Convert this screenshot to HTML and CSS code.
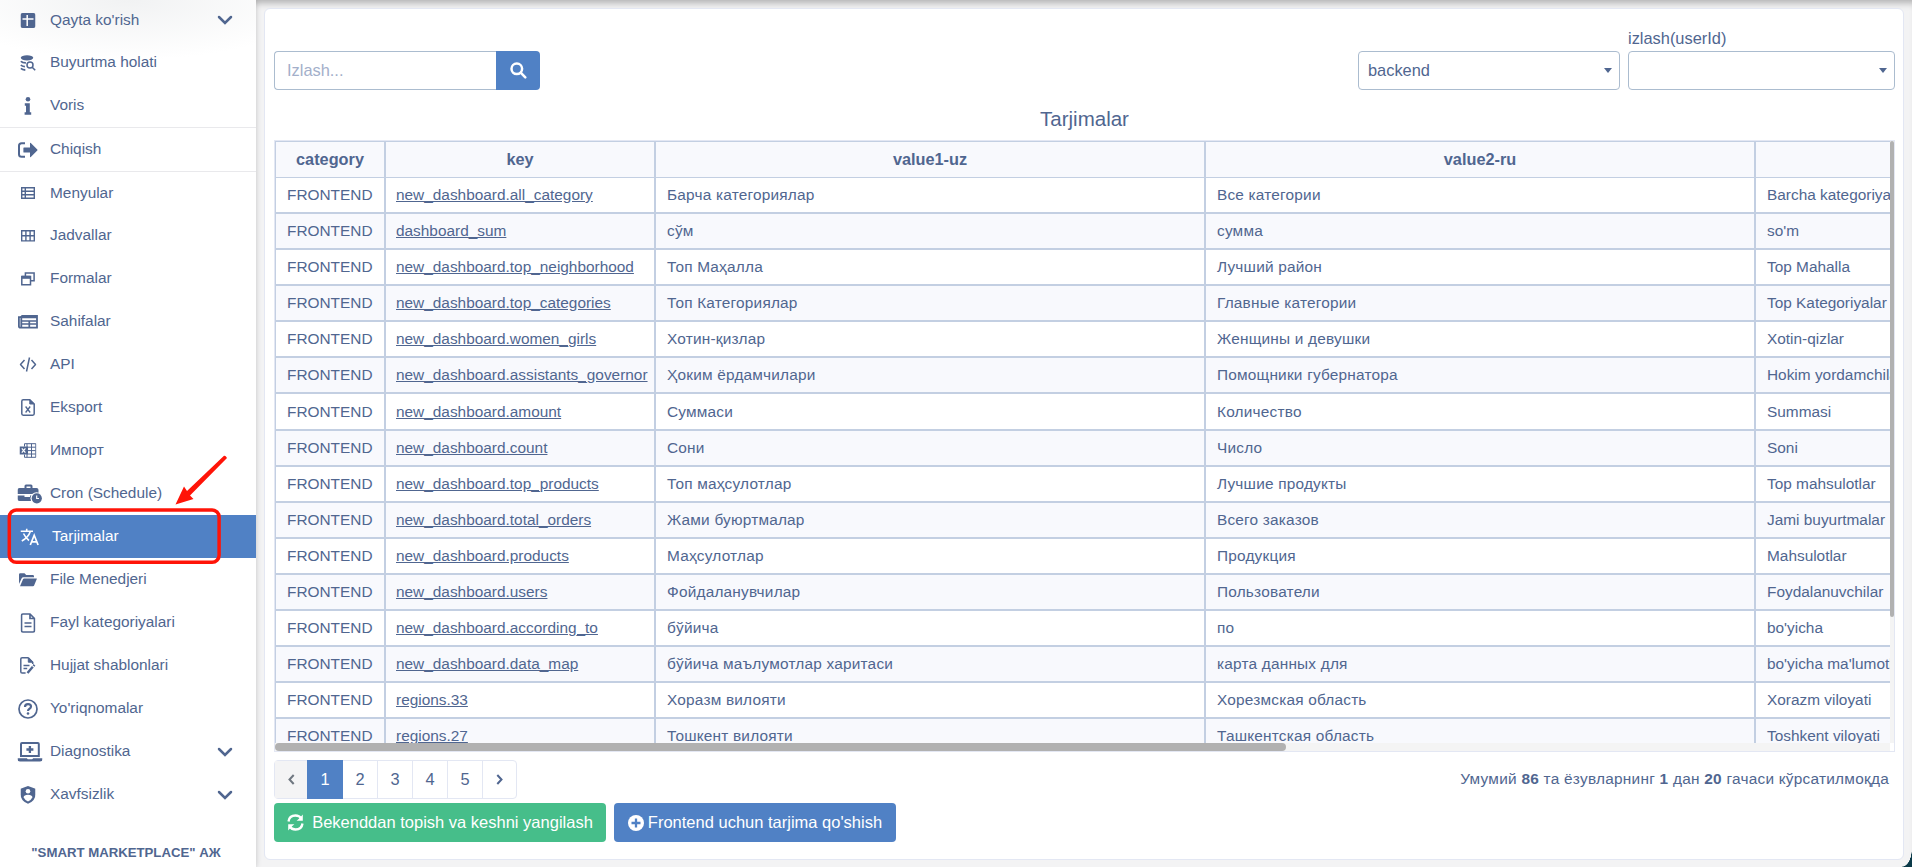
FILE: index.html
```html
<!DOCTYPE html>
<html lang="uz">
  <head>
    <meta charset="UTF-8" />
    <title>Tarjimalar</title>
    <link rel="stylesheet" href="styles.css" />
  </head>

  <body>
    <aside class="sidebar">
      <ul class="menu">
        <li class="menu-item first">
          <span class="icon"><svg width="15" height="15" viewBox="0 0 15 15"><rect width="15" height="15" rx="2" fill="currentColor" stroke="none" /><path d="M6.7 2v11M2 6h11" stroke="#fff" stroke-width="1.5" /></svg></span>
          <span class="label">Qayta ko'rish</span>
          <svg class="chevron" width="16" height="10" viewBox="0 0 16 10"><path d="M2 2l6 6 6-6" /></svg>
        </li>
        <li class="menu-item">
          <span class="icon"><svg width="16" height="16" viewBox="0 0 16 16" stroke="currentColor"><ellipse cx="7" cy="2.8" rx="6.2" ry="2.6" fill="currentColor" stroke="none" /><path d="M.9 6.2c1 1.3 3 1.6 5 1.6M.9 10c.8 1 2.2 1.5 4 1.6M.9 13.4c1 1 2.4 1.5 4.4 1.6" stroke-width="1.8" /><circle cx="10" cy="10" r="3" stroke-width="1.5" /><path d="M12.2 12.2l3 3" stroke-width="1.6" /></svg></span>
          <span class="label">Buyurtma holati</span>
        </li>
        <li class="menu-item">
          <span class="icon"><svg width="8" height="18" viewBox="0 0 8 18" fill="currentColor"><circle cx="4" cy="2.3" r="2.3" /><path d="M.8 6.3h5v9h1.4v2.4H.6v-2.4H2V8.8H.8z" /></svg></span>
          <span class="label">Voris</span>
        </li>
        <li class="menu-item lined">
          <span class="icon"><svg width="20" height="16" viewBox="0 0 20 16"><path d="M7 1.2H3.6Q1 1.2 1 3.8v8.4q0 2.6 2.6 2.6H7" stroke-width="2" /><path d="M6 5.4h6V1.4q0-1 .8-.3l6.5 6.3q.5.6 0 1.2l-6.5 6.3q-.8.7-.8-.3v-4H6q-.6 0-.6-.6V6q0-.6.6-.6z" fill="currentColor" stroke="none" /></svg></span>
          <span class="label">Chiqish</span>
        </li>
        <li class="menu-item lined">
          <span class="icon"><svg width="14" height="12" viewBox="0 0 14 12"><path d="M.7.7h12.6v10.6H.7zM4.3.7v10.6M.7 4.2h12.6M.7 7.8h12.6" stroke-width="1.4" /></svg></span>
          <span class="label">Menyular</span>
        </li>
        <li class="menu-item">
          <span class="icon"><svg width="14" height="12" viewBox="0 0 14 12"><path d="M.7.7h12.6v10.2H.7zM4.9.7v10.2M9.1.7v10.2M.7 5.8h12.6" stroke-width="1.4" /></svg></span>
          <span class="label">Jadvallar</span>
        </li>
        <li class="menu-item">
          <span class="icon"><svg width="14" height="14" viewBox="0 0 14 14"><path d="M4.4 4V.9h8.7v7.9H10M.8 4.6h8.7v8.1H.8z" stroke-width="1.5" /><path d="M.8 5.3h8.7" stroke-width="3" /></svg></span>
          <span class="label">Formalar</span>
        </li>
        <li class="menu-item">
          <span class="icon"><svg width="20" height="14" viewBox="0 0 20 14"><path d="M3.3 1H19v11.7H2.5Q.9 12.7.9 11.2V2.2H3M3.3 1v11" stroke-width="1.8" /><path d="M4 2.3h15M4 6h14.5M4 9h14.5M11.3 6v6" stroke-width="1.7" /></svg></span>
          <span class="label">Sahifalar</span>
        </li>
        <li class="menu-item">
          <span class="icon"><svg width="17" height="15" viewBox="0 0 17 15"><path d="M5 3L1 7.5 5 12M12 3l4 4.5-4 4.5M10 .5L7 14.5" stroke-width="1.5" /></svg></span>
          <span class="label">API</span>
        </li>
        <li class="menu-item">
          <span class="icon"><svg width="14" height="17" viewBox="0 0 14 17"><path d="M8.8.8H2.2Q.8.8.8 2.2v12.6q0 1.4 1.4 1.4h9.6q1.4 0 1.4-1.4V5z" stroke-width="1.5" /><path d="M8.8.8V5h4.4z" fill="currentColor" /><path d="M4.6 7.5l4.6 6M9.2 7.5l-4.6 6" stroke-width="1.3" /></svg></span>
          <span class="label">Eksport</span>
        </li>
        <li class="menu-item">
          <span class="icon"><svg width="17" height="15" viewBox="0 0 17 15"><path d="M5 3.5V.7h11.3v13.6H5v-2.8M12 .7v13.6M7.5.7v13.6M8 4.2h8M8 7.6h8M8 11h8" stroke-width="1" /><path d="M0 3.5h8.5v8H0z" fill="currentColor" stroke="none" /><path d="M2.3 5.3l3.6 4.4M5.9 5.3L2.3 9.7" stroke="#fff" stroke-width="1.2" /></svg></span>
          <span class="label">Импорт</span>
        </li>
        <li class="menu-item">
          <span class="icon wide"><svg width="25" height="20" viewBox="0 0 25 20" fill="currentColor"><path d="M7 4V2q0-1.5 1.5-1.5h5Q15 .5 15 2v2h4q2 0 2 2v4H0V6q0-2 2-2zm2 0h4V2.5H9zM0 11.5h7V13h5.5v-1.5h3V17H2q-2 0-2-2z" /><circle cx="19" cy="14.3" r="6" fill="#fff" /><circle cx="19.3" cy="14.3" r="5.1" /><path d="M19.2 11.5v3h2.3" fill="none" stroke="#fff" stroke-width="1.2" /></svg></span>
          <span class="label">Cron (Schedule)</span>
        </li>
        <li class="menu-item active">
          <span class="icon"><svg width="19" height="18" viewBox="0 0 19 18"><path d="M0 3.2h12.5M6.2.7v2.5M9.8 3.5Q7.8 9.5 1.3 13M3 5.5q2.2 4.5 5.5 7" stroke-width="1.6" /><path d="M9.8 17l3.9-9.7L17.6 17M11.2 13.8h5" stroke-width="1.7" /></svg></span>
          <span class="label">Tarjimalar</span>
          <svg class="callout" width="224" height="118" viewBox="0 0 224 118">
            <rect x="2.3" y="55" width="209.8" height="52.2" rx="7" fill="none" stroke="#ff1408" stroke-width="3.5" />
            <path d="M217 .8q1.500-.5 3 2.200L183 40.500l3.500 3.500-18 5.500 8.500-18 3 4.500z" fill="#ff1408" />
          </svg>
        </li>
        <li class="menu-item">
          <span class="icon"><svg width="18" height="14" viewBox="0 0 18 14" fill="currentColor"><path d="M0 11V1.5Q0 .3 1.2.3h4.3l1.7 1.8h6.6q1.2 0 1.2 1.2v1H4.3Q3.2 4.300 2.700 5.300zM1 13.300l3-7q.3-.8 1.100-.8H17.500q.6 0 .3.600l-2.700 6.500q-.3.700-1.100.7z" /></svg></span>
          <span class="label">File Menedjeri</span>
        </li>
        <li class="menu-item">
          <span class="icon"><svg width="15" height="20" viewBox="0 0 15 20"><path d="M9.5 1H2.4Q1 1 1 2.4v15.2Q1 19 2.4 19h10.2q1.4 0 1.4-1.4V5.500zM9.5 1v4.5H14M4 10h7M4 13.5h7" stroke-width="1.7" /></svg></span>
          <span class="label">Fayl kategoriyalari</span>
        </li>
        <li class="menu-item">
          <span class="icon"><svg width="16" height="17" viewBox="0 0 16 17"><path d="M8.3.8H2.1Q.8.8.8 2.1v12.6q0 1.3 1.3 1.3h3.500M12.700 7V5.200L8.300.800M3.500 8.500h6M3.500 11.500h3.700" stroke-width="1.5" /><path d="M8.3.8v4.4h4.4z" fill="currentColor" /><path d="M7.5 16l5.3-6.2M13.5 9l1-1.1" stroke-width="2.4" /></svg></span>
          <span class="label">Hujjat shablonlari</span>
        </li>
        <li class="menu-item">
          <span class="icon"><svg width="20" height="20" viewBox="0 0 20 20"><circle cx="10" cy="10" r="9" stroke-width="1.7" /><path d="M7 8q0-2.8 3-2.8t3 2.4q0 1.3-1.5 2.2T10 12" stroke-width="2.2" /><circle cx="10" cy="14.5" r="1.3" fill="currentColor" stroke="none" /></svg></span>
          <span class="label">Yo'riqnomalar</span>
        </li>
        <li class="menu-item">
          <span class="icon wide"><svg width="25" height="20" viewBox="0 0 25 20"><path d="M3.5 14V2q0-1 1-1h15.8q1 0 1 1v12z" stroke-width="2" /><path d="M12.4 4v7M8.9 7.5h7" stroke-width="2.3" /><path d="M0 16.3h9.5q.3 1 1 1h4q.8 0 1-1H25v1q0 2.3-2.5 2.3h-20Q0 19.600 0 17.300z" fill="currentColor" stroke="none" /></svg></span>
          <span class="label">Diagnostika</span>
          <svg class="chevron" width="16" height="10" viewBox="0 0 16 10"><path d="M2 2l6 6 6-6" /></svg>
        </li>
        <li class="menu-item">
          <span class="icon"><svg width="15" height="18" viewBox="0 0 15 18"><path d="M7.5 0L15 2.8v5.4q0 6.5-7.5 9.6Q0 14.7 0 8.2V2.8z" fill="currentColor" stroke="none" /><circle cx="7.5" cy="5.3" r="2.3" fill="#fff" stroke="none" /><path d="M3 11.2q.5-2.5 4.5-2.5t4.5 2.5q-1.5 3-4.5 4.4Q4.5 14.2 3 11.2z" fill="#fff" stroke="none" /></svg></span>
          <span class="label">Xavfsizlik</span>
          <svg class="chevron" width="16" height="10" viewBox="0 0 16 10"><path d="M2 2l6 6 6-6" /></svg>
        </li>
      </ul>
      <div class="company">"SMART MARKETPLACE" АЖ</div>
    </aside>

    <main class="content">
      <section class="card">
        <div class="toolbar">
          <div class="search">
            <input type="text" placeholder="Izlash..." />
            <button type="button" aria-label="Izlash"><svg width="17" height="17" viewBox="0 0 17 17"><circle cx="6.8" cy="6.8" r="5.3" /><path d="M10.7 10.7l4.600 4.600" /></svg></button>
          </div>
          <div class="filters">
            <div class="select type-select">backend</div>
            <div class="field">
              <label>izlash(userId)</label>
              <div class="select user-select"></div>
            </div>
          </div>
        </div>

        <h1>Tarjimalar</h1>

        <div class="table-box">
          <div class="table-view">
            <table>
              <colgroup>
                <col class="col-category" />
                <col class="col-key" />
                <col class="col-value" />
                <col class="col-value" />
                <col class="col-value" />
              </colgroup>
              <thead>
                <tr><th>category</th><th>key</th><th>value1-uz</th><th>value2-ru</th><th></th></tr>
              </thead>
              <tbody>
                <tr><td>FRONTEND</td><td><a>new_dashboard.all_category</a></td><td>Барча категориялар</td><td>Все категории</td><td>Barcha kategoriyalar</td></tr>
                <tr><td>FRONTEND</td><td><a>dashboard_sum</a></td><td>сўм</td><td>сумма</td><td>so'm</td></tr>
                <tr><td>FRONTEND</td><td><a>new_dashboard.top_neighborhood</a></td><td>Топ Маҳалла</td><td>Лучший район</td><td>Top Mahalla</td></tr>
                <tr><td>FRONTEND</td><td><a>new_dashboard.top_categories</a></td><td>Топ Категориялар</td><td>Главные категории</td><td>Top Kategoriyalar</td></tr>
                <tr><td>FRONTEND</td><td><a>new_dashboard.women_girls</a></td><td>Хотин-қизлар</td><td>Женщины и девушки</td><td>Xotin-qizlar</td></tr>
                <tr><td>FRONTEND</td><td><a>new_dashboard.assistants_governor</a></td><td>Ҳоким ёрдамчилари</td><td>Помощники губернатора</td><td>Hokim yordamchilari</td></tr>
                <tr class="tall"><td>FRONTEND</td><td><a>new_dashboard.amount</a></td><td>Суммаси</td><td>Количество</td><td>Summasi</td></tr>
                <tr><td>FRONTEND</td><td><a>new_dashboard.count</a></td><td>Сони</td><td>Число</td><td>Soni</td></tr>
                <tr><td>FRONTEND</td><td><a>new_dashboard.top_products</a></td><td>Топ маҳсулотлар</td><td>Лучшие продукты</td><td>Top mahsulotlar</td></tr>
                <tr><td>FRONTEND</td><td><a>new_dashboard.total_orders</a></td><td>Жами буюртмалар</td><td>Всего заказов</td><td>Jami buyurtmalar</td></tr>
                <tr><td>FRONTEND</td><td><a>new_dashboard.products</a></td><td>Маҳсулотлар</td><td>Продукция</td><td>Mahsulotlar</td></tr>
                <tr><td>FRONTEND</td><td><a>new_dashboard.users</a></td><td>Фойдаланувчилар</td><td>Пользователи</td><td>Foydalanuvchilar</td></tr>
                <tr><td>FRONTEND</td><td><a>new_dashboard.according_to</a></td><td>бўйича</td><td>по</td><td>bo'yicha</td></tr>
                <tr><td>FRONTEND</td><td><a>new_dashboard.data_map</a></td><td>бўйича маълумотлар харитаси</td><td>карта данных для</td><td>bo'yicha ma'lumotlar</td></tr>
                <tr><td>FRONTEND</td><td><a>regions.33</a></td><td>Хоразм вилояти</td><td>Хорезмская область</td><td>Xorazm viloyati</td></tr>
                <tr><td>FRONTEND</td><td><a>regions.27</a></td><td>Тошкент вилояти</td><td>Ташкентская область</td><td>Toshkent viloyati</td></tr>
              </tbody>
            </table>
          </div>
          <div class="track-y"><div class="thumb"></div></div>
          <div class="track-x"><div class="thumb"></div></div>
        </div>

        <div class="table-footer">
          <div class="pagination">
            <span class="arrow disabled"><svg width="7" height="11" viewBox="0 0 7 11"><path d="M5.7 1L1.5 5.5 5.7 10" /></svg></span>
            <span class="current">1</span>
            <span>2</span>
            <span>3</span>
            <span>4</span>
            <span>5</span>
            <span class="arrow"><svg width="7" height="11" viewBox="0 0 7 11"><path d="M1.3 1l4.2 4.5L1.3 10" /></svg></span>
          </div>
          <div class="summary">Умумий <b>86</b> та ёзувларнинг <b>1</b> дан <b>20</b> гачаси кўрсатилмоқда</div>
        </div>

        <div class="actions">
          <button type="button" class="btn btn-success"><svg width="17" height="17" viewBox="0 0 17 17"><path d="M1.5 7.5C2 3.5 5 1.5 8.5 1.5c2.5 0 4.5 1 5.8 3M15.5 9.5c-.5 4-3.5 6-7 6-2.5 0-4.5-1-5.8-3" /><path d="M15.8.5v6.2H9.6l2.3-2 1.7-1.7zM1.2 16.5v-6.2h6.2l-2.300 2-1.700 1.700z" class="solid" /></svg><span>Bekenddan topish va keshni yangilash</span></button>
          <button type="button" class="btn btn-primary"><svg width="16" height="16" viewBox="0 0 16 16"><circle cx="8" cy="8" r="8" class="solid" /><path d="M8 3.5v9M3.5 8h9" class="plus" /></svg><span>Frontend uchun tarjima qo'shish</span></button>
        </div>
      </section>
    </main>
    <div class="corner"></div>
  </body>
</html>
```

FILE: styles.css
```css
* {
  box-sizing: border-box;
}
body {
  margin: 0;
  height: 867px;
  display: flex;
  overflow: hidden;
  background: #f3f3f4;
  color: #506690;
  font-family: 'Liberation Sans', Arial, sans-serif;
  font-size: 16.4px;
}

/* sidebar */
.sidebar {
  width: 256px;
  flex: none;
  display: flex;
  flex-direction: column;
  background: radial-gradient(ellipse 190px 60px at 50% 0, #f1f2f3, #fff) #fff;
  box-shadow: 0 0 6px rgba(0, 0, 0, 0.16);
  z-index: 1;
}
.menu {
  list-style: none;
  margin: 0;
  padding: 0;
}
.menu-item {
  height: 43px;
  display: flex;
  align-items: center;
  position: relative;
  padding-right: 23px;
  font-size: 15.4px;
}
.menu-item.first {
  height: 41px;
  padding-bottom: 1px;
}
.menu-item.lined {
  border-top: 1px solid #e9e9ec;
  height: 44px;
}
.menu-item.lined + .lined {
  height: 43px;
}
.label {
  padding-bottom: 1px;
}
.icon {
  width: 50px;
  flex: none;
  display: flex;
  align-items: center;
  padding-left: 28px;
}
.icon.wide {
  padding-left: 29.5px;
}
.icon svg {
  flex: none;
  transform: translateX(-50%);
  fill: none;
  stroke: currentColor;
}
.icon svg[fill='currentColor'] {
  fill: currentColor;
  stroke: none;
}
.chevron {
  margin-left: auto;
  fill: none;
  stroke: currentColor;
  stroke-width: 2.5;
  stroke-linecap: round;
}
.menu-item.active {
  background: #5081c5;
  color: #fff;
}
.active .icon {
  width: 52px;
  padding-left: 30px;
}
.callout {
  position: absolute;
  left: 7px;
  top: -60px;
}
.company {
  margin-top: 29px;
  text-align: center;
  font-size: 13.2px;
  font-weight: bold;
  padding-right: 4px;
}

/* content */
.content {
  flex: 1;
  padding: 8px;
  box-shadow: inset 0 8px 7px -5px rgba(0, 0, 0, 0.28);
}
.card {
  height: 852px;
  padding: 20px 8px 0 9px;
  background: #fff;
  border: 1px solid #e3e7f3;
  border-radius: 6px;
}
.toolbar {
  height: 61px;
  display: flex;
  justify-content: space-between;
  align-items: flex-end;
}
.search {
  display: flex;
  width: 266px;
  height: 39px;
}
.search input {
  flex: 1;
  min-width: 0;
  border: 1px solid #abbccf;
  border-right: 0;
  border-radius: 4px 0 0 4px;
  padding: 0 12px;
  font: inherit;
}
.search input::placeholder {
  color: #a3afca;
}
.search button {
  width: 44px;
  border: 0;
  padding: 0;
  border-radius: 0 4px 4px 0;
  background: #5081c5;
}
.search svg {
  display: block;
  margin: 0 auto;
  fill: none;
  stroke: #fff;
  stroke-width: 2.5;
  stroke-linecap: round;
}
.filters {
  display: flex;
  align-items: flex-end;
  gap: 8px;
}
.field label {
  display: block;
  height: 23px;
  line-height: 21px;
}
.select {
  height: 39px;
  display: flex;
  align-items: center;
  justify-content: space-between;
  padding: 0 7px 0 9px;
  border: 1px solid #abbccf;
  border-radius: 4px;
}
.select::after {
  content: '';
  margin-left: auto;
  border: 4px solid transparent;
  border-top: 5px solid #506690;
  border-bottom: 0;
}
.type-select {
  width: 262px;
}
.user-select {
  width: 267px;
}
h1 {
  margin: 17px 0 10px;
  height: 23px;
  line-height: 23px;
  font-size: 20.5px;
  font-weight: normal;
  text-align: center;
}

/* table */
.table-box {
  display: grid;
  grid-template-columns: 1fr 4px;
  grid-template-rows: 602px 8px;
  height: 612px;
  border: 1px solid #e3e7f3;
}
.table-view {
  overflow: hidden;
}
table {
  width: 2031px;
  table-layout: fixed;
  border-collapse: separate;
  border-spacing: 0;
  border-left: 1px solid #c3cfe2;
  border-top: 1px solid #c3cfe2;
  font-size: 15.4px;
}
.col-category {
  width: 110px;
}
.col-key {
  width: 270px;
}
.col-value {
  width: 550px;
}
th,
td {
  border-right: 2px solid #c3cfe2;
  white-space: nowrap;
}
th {
  height: 36px;
  padding: 0;
  background: #f8f9fd;
  border-bottom: 1px solid #c3cfe2;
  font-size: 16.3px;
}
td {
  height: 36px;
  padding: 0 10px 0 11px;
  border-bottom: 2px solid #c3cfe2;
}
td:nth-child(2) {
  padding-left: 10px;
}
td:nth-child(3),
td:nth-child(4) {
  letter-spacing: 0.2px;
}
.tall td {
  height: 37px;
}
tbody tr:nth-child(even) td {
  background: #f8f9fd;
}
td a {
  text-decoration: underline;
}
.track-y,
.track-x {
  background: #f4f4f4;
}
.track-y .thumb {
  height: 476px;
  background: #b1b1b1;
  border-radius: 2px;
}
.track-x .thumb {
  width: 1011px;
  height: 8px;
  background: #b1b1b1;
  border-radius: 4px;
}

/* footer */
.table-footer {
  display: flex;
  justify-content: space-between;
  align-items: center;
  margin-top: 8px;
  height: 39px;
}
.pagination {
  display: flex;
  height: 39px;
  border: 1px solid #e3e7f3;
  border-radius: 4px;
}
.pagination span {
  width: 35px;
  display: flex;
  align-items: center;
  justify-content: center;
  border-right: 1px solid #e3e7f3;
}
.pagination span:last-child {
  border-right: 0;
}
.pagination svg {
  fill: none;
  stroke: currentColor;
  stroke-width: 2;
}
.pagination .arrow {
  width: 33px;
}
.pagination .disabled {
  width: 32px;
  background: #f4f4f5;
  border-right: 0;
  color: #6f7780;
}
.pagination .current {
  width: 36px;
  margin: -1px 0;
  background: #5081c5;
  border-right: 0;
  color: #fff;
}
.summary {
  padding: 0 6px 2px 0;
  font-size: 15.4px;
  letter-spacing: 0.25px;
}
.actions {
  display: flex;
  gap: 8px;
  margin-top: 4px;
}
.btn {
  height: 39px;
  display: flex;
  align-items: center;
  justify-content: center;
  padding: 0;
  border: 0;
  border-radius: 4px;
  color: #fff;
  font: inherit;
  font-size: 16.5px;
  white-space: nowrap;
}
.btn svg {
  fill: none;
  stroke: #fff;
  stroke-width: 2.3;
}
.btn .solid {
  fill: #fff;
  stroke: none;
}
.btn .plus {
  stroke: #5081c5;
}
.btn-success {
  width: 332px;
  gap: 8px;
  background: #46be8a;
}
.btn-primary {
  width: 282px;
  gap: 4px;
  background: #5081c5;
}

/* rounded window corner */
.corner {
  position: absolute;
  right: 0;
  bottom: 0;
  width: 10px;
  height: 18px;
  background: radial-gradient(ellipse 10px 18px at 0 0, transparent 96%, #0b3a49 100%);
}
```
